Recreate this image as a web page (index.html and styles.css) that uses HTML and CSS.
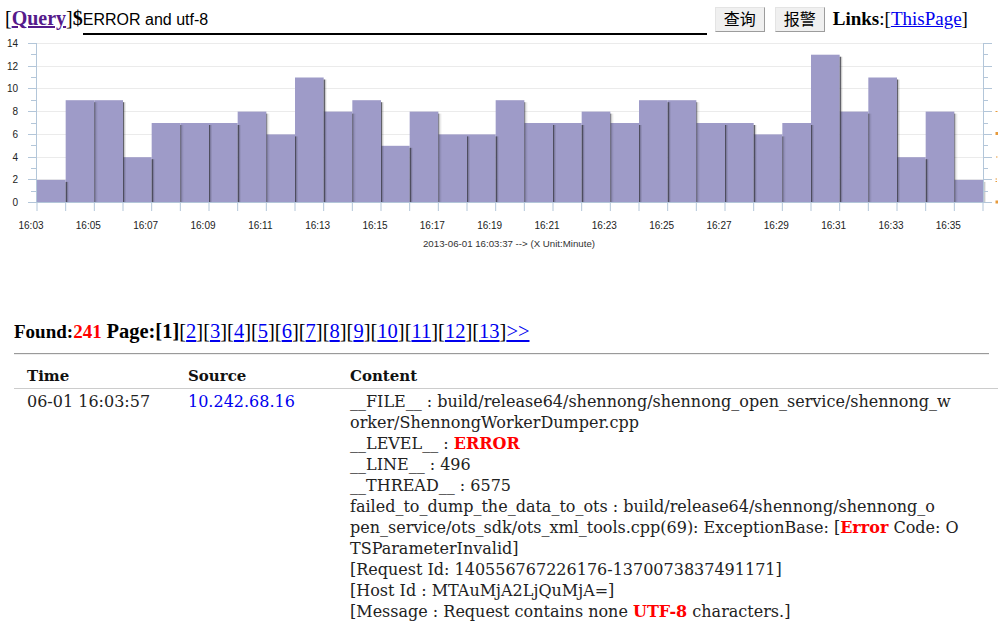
FILE: index.html
```html
<!DOCTYPE html>
<html>
<head>
<meta charset="utf-8">
<title>Query</title>
<link rel="stylesheet" href="styles.css">
</head>
<body>
<div class="topbar">
  <span class="qlabel">[<a class="query" href="#">Query</a>]<b>$</b></span>
  <input class="search" type="text" value="ERROR and utf-8">
  <button class="btn">查询</button>
  <button class="btn btn-last">报警</button>
  <span class="links"><b>Links</b>:[<a href="#">ThisPage</a>]</span>
</div>

<svg class="chart" width="998" height="216" viewBox="0 36 998 216" xmlns="http://www.w3.org/2000/svg">
  <defs>
    <linearGradient id="shade" x1="0" x2="1" y1="0" y2="0">
      <stop offset="0" stop-color="#3a3a44" stop-opacity=".8"/>
      <stop offset=".33" stop-color="#3a3a44" stop-opacity=".8"/>
      <stop offset=".34" stop-color="#000" stop-opacity=".2"/>
      <stop offset=".66" stop-color="#000" stop-opacity=".2"/>
      <stop offset=".67" stop-color="#000" stop-opacity=".08"/>
      <stop offset="1" stop-color="#000" stop-opacity=".08"/>
    </linearGradient>
  </defs>
  <path class="grid" d="M37 43.5H983M37 66.5H983M37 88.5H983M37 111.5H983M37 134.5H983M37 157.5H983M37 179.5H983"/>
  <g class="bars">
    <rect x="37" y="179.9" width="28.67" height="22.8"/>
    <rect x="65.67" y="100.2" width="28.67" height="102.5"/>
    <rect x="94.33" y="100.2" width="28.67" height="102.5"/>
    <rect x="123" y="157.2" width="28.67" height="45.5"/>
    <rect x="151.67" y="123" width="28.67" height="79.7"/>
    <rect x="180.33" y="123" width="28.67" height="79.7"/>
    <rect x="209" y="123" width="28.67" height="79.7"/>
    <rect x="237.67" y="111.6" width="28.67" height="91.1"/>
    <rect x="266.33" y="134.4" width="28.67" height="68.3"/>
    <rect x="295" y="77.5" width="28.67" height="125.2"/>
    <rect x="323.67" y="111.6" width="28.67" height="91.1"/>
    <rect x="352.33" y="100.2" width="28.67" height="102.5"/>
    <rect x="381" y="145.8" width="28.67" height="56.9"/>
    <rect x="409.67" y="111.6" width="28.67" height="91.1"/>
    <rect x="438.33" y="134.4" width="28.67" height="68.3"/>
    <rect x="467" y="134.4" width="28.67" height="68.3"/>
    <rect x="495.67" y="100.2" width="28.67" height="102.5"/>
    <rect x="524.33" y="123" width="28.67" height="79.7"/>
    <rect x="553" y="123" width="28.67" height="79.7"/>
    <rect x="581.67" y="111.6" width="28.67" height="91.1"/>
    <rect x="610.33" y="123" width="28.67" height="79.7"/>
    <rect x="639" y="100.2" width="28.67" height="102.5"/>
    <rect x="667.67" y="100.2" width="28.67" height="102.5"/>
    <rect x="696.33" y="123" width="28.67" height="79.7"/>
    <rect x="725" y="123" width="28.67" height="79.7"/>
    <rect x="753.67" y="134.4" width="28.67" height="68.3"/>
    <rect x="782.33" y="123" width="28.67" height="79.7"/>
    <rect x="811" y="54.7" width="28.67" height="148"/>
    <rect x="839.67" y="111.6" width="28.67" height="91.1"/>
    <rect x="868.33" y="77.5" width="28.67" height="125.2"/>
    <rect x="897" y="157.2" width="28.67" height="45.5"/>
    <rect x="925.67" y="111.6" width="28.67" height="91.1"/>
    <rect x="954.33" y="179.9" width="28.67" height="22.8"/>
  </g>
  <g class="shadows">
    <rect x="65.67" y="181.9" width="3" height="20.8"/>
    <rect x="94.33" y="102.2" width="3" height="100.5"/>
    <rect x="123" y="102.2" width="3" height="100.5"/>
    <rect x="151.67" y="159.2" width="3" height="43.5"/>
    <rect x="180.33" y="125" width="3" height="77.7"/>
    <rect x="209" y="125" width="3" height="77.7"/>
    <rect x="237.67" y="125" width="3" height="77.7"/>
    <rect x="266.33" y="113.6" width="3" height="89.1"/>
    <rect x="295" y="136.4" width="3" height="66.3"/>
    <rect x="323.67" y="79.5" width="3" height="123.2"/>
    <rect x="352.33" y="113.6" width="3" height="89.1"/>
    <rect x="381" y="102.2" width="3" height="100.5"/>
    <rect x="409.67" y="147.8" width="3" height="54.9"/>
    <rect x="438.33" y="113.6" width="3" height="89.1"/>
    <rect x="467" y="136.4" width="3" height="66.3"/>
    <rect x="495.67" y="136.4" width="3" height="66.3"/>
    <rect x="524.33" y="102.2" width="3" height="100.5"/>
    <rect x="553" y="125" width="3" height="77.7"/>
    <rect x="581.67" y="125" width="3" height="77.7"/>
    <rect x="610.33" y="113.6" width="3" height="89.1"/>
    <rect x="639" y="125" width="3" height="77.7"/>
    <rect x="667.67" y="102.2" width="3" height="100.5"/>
    <rect x="696.33" y="102.2" width="3" height="100.5"/>
    <rect x="725" y="125" width="3" height="77.7"/>
    <rect x="753.67" y="125" width="3" height="77.7"/>
    <rect x="782.33" y="136.4" width="3" height="66.3"/>
    <rect x="811" y="125" width="3" height="77.7"/>
    <rect x="839.67" y="56.7" width="3" height="146"/>
    <rect x="868.33" y="113.6" width="3" height="89.1"/>
    <rect x="897" y="79.5" width="3" height="123.2"/>
    <rect x="925.67" y="159.2" width="3" height="43.5"/>
    <rect x="954.33" y="113.6" width="3" height="89.1"/>
    <rect x="983" y="181.9" width="3" height="20.8"/>
  </g>
  <path class="axis" d="M36.5 43V203M983.5 43V203M28 202.5H992
    M28 179.5H36.5M28 157.5H36.5M28 134.5H36.5M28 111.5H36.5M28 88.5H36.5M28 66.5H36.5M28 43.5H36.5
    M31 191.5H36.5M31 168.5H36.5M31 145.5H36.5M31 123.5H36.5M31 100.5H36.5M31 77.5H36.5M31 54.5H36.5
    M983.5 179.5H992M983.5 157.5H992M983.5 134.5H992M983.5 111.5H992M983.5 88.5H992M983.5 66.5H992M983.5 43.5H992
    M983.5 191.5H988M983.5 168.5H988M983.5 145.5H988M983.5 123.5H988M983.5 100.5H988M983.5 77.5H988M983.5 54.5H988
    M37 203V211M65.67 203V211M94.33 203V211M123 203V211M151.67 203V211M180.33 203V211M209 203V211M237.67 203V211
    M266.33 203V211M295 203V211M323.67 203V211M352.33 203V211M381 203V211M409.67 203V211M438.33 203V211M467 203V211
    M495.67 203V211M524.33 203V211M553 203V211M581.67 203V211M610.33 203V211M639 203V211M667.67 203V211M696.33 203V211
    M725 203V211M753.67 203V211M782.33 203V211M811 203V211M839.67 203V211M868.33 203V211M897 203V211M925.67 203V211
    M954.33 203V211M983 203V211"/>
  <path class="rmarks" d="M995.5 111h2v1h-2zM995.5 132h2.5v3h-2.5zM996 156.5h1.5v1h-1.5zM995.5 178.5h1.5v1h-1.5zM995.5 181h1.5v1h-1.5zM995.5 200.5h2.5v3h-2.5z"/>
  <g class="ylab">
    <text x="18" y="206">0</text>
    <text x="18" y="183">2</text>
    <text x="18" y="161">4</text>
    <text x="18" y="138">6</text>
    <text x="18" y="115">8</text>
    <text x="18" y="92">10</text>
    <text x="18" y="70">12</text>
    <text x="18" y="47">14</text>
  </g>
  <g class="xlab">
    <text x="31" y="228.5">16:03</text>
    <text x="88.33" y="228.5">16:05</text>
    <text x="145.67" y="228.5">16:07</text>
    <text x="203" y="228.5">16:09</text>
    <text x="260.33" y="228.5">16:11</text>
    <text x="317.67" y="228.5">16:13</text>
    <text x="375" y="228.5">16:15</text>
    <text x="432.33" y="228.5">16:17</text>
    <text x="489.67" y="228.5">16:19</text>
    <text x="547" y="228.5">16:21</text>
    <text x="604.33" y="228.5">16:23</text>
    <text x="661.67" y="228.5">16:25</text>
    <text x="719" y="228.5">16:27</text>
    <text x="776.33" y="228.5">16:29</text>
    <text x="833.67" y="228.5">16:31</text>
    <text x="891" y="228.5">16:33</text>
    <text x="948.33" y="228.5">16:35</text>
  </g>
  <text class="unit" x="509" y="246.5">2013-06-01 16:03:37 --&gt; (X Unit:Minute)</text>
</svg>

<div class="found"><b>Found:</b><b class="count">241</b> <span class="pages"><b>Page:</b><b>[1]</b>[<a href="#">2</a>][<a href="#">3</a>][<a href="#">4</a>][<a href="#">5</a>][<a href="#">6</a>][<a href="#">7</a>][<a href="#">8</a>][<a href="#">9</a>][<a href="#">10</a>][<a href="#">11</a>][<a href="#">12</a>][<a href="#">13</a>]<a href="#">&gt;&gt;</a></span></div>
<div class="rule"></div>

<table class="logs">
  <colgroup><col class="c-time"><col class="c-src"><col class="c-content"></colgroup>
  <thead>
    <tr><th>Time</th><th>Source</th><th>Content</th></tr>
  </thead>
  <tbody>
    <tr>
      <td>06-01 16:03:57</td>
      <td><a class="ip" href="#">10.242.68.16</a></td>
      <td>__FILE__ : build/release64/shennong/shennong_open_service/shennong_w<br>orker/ShennongWorkerDumper.cpp<br>__LEVEL__ : <b class="hl">ERROR</b><br>__LINE__ : 496<br>__THREAD__ : 6575<br>failed_to_dump_the_data_to_ots : build/release64/shennong/shennong_o<br>pen_service/ots_sdk/ots_xml_tools.cpp(69): ExceptionBase: [<b class="hl">Error</b> Code: O<br>TSParameterInvalid]<br>[Request Id: 140556767226176-1370073837491171]<br>[Host Id : MTAuMjA2LjQuMjA=]<br>[Message : Request contains none <b class="hl">UTF-8</b> characters.]</td>
    </tr>
  </tbody>
</table>
</body>
</html>
```

FILE: styles.css
```css
html, body {
  margin: 0;
  padding: 0;
  overflow: hidden;
  background: #fff;
}

body {
  font-family: "Liberation Serif", "Times New Roman", serif;
  color: #000;
}

a {
  color: #0000ee;
}

/* top query bar */
.topbar {
  display: flex;
  align-items: baseline;
  height: 36px;
  box-sizing: border-box;
  padding: 7px 0 0 5px;
  font-size: 20px;
}

.qlabel .query {
  color: #551a8b;
  font-weight: bold;
}

.search {
  width: 624px;
  height: 24px;
  box-sizing: border-box;
  margin: 0 8px 0 0;
  padding: 0 0 4px 0;
  border: none;
  border-bottom: 2px solid #000;
  border-radius: 0;
  font: 16px/18px "Liberation Sans", Arial, sans-serif;
  color: #000;
  background: transparent;
  outline: none;
}

.btn {
  align-self: flex-start;
  width: 50px;
  height: 25px;
  margin: 0 10px 0 0;
  padding: 0 0 3px 0;
  box-sizing: border-box;
  border: 1px solid;
  border-color: #e4e4e4 #9c9c9c #9c9c9c #e4e4e4;
  border-radius: 0;
  background: #f0f0f0;
  font: 16px/20px "Noto Sans CJK SC", sans-serif;
  color: #000;
}

.btn-last {
  margin-right: 8px;
}

.links {
  font-size: 19px;
}

/* chart */
.chart {
  display: block;
}

.chart .grid {
  stroke: #ebebeb;
  stroke-width: 1;
  fill: none;
}

.chart .bars rect {
  fill: #9e9bc8;
}

.chart .shadows rect {
  fill: url(#shade);
}

.chart .axis {
  stroke: #b3c6d9;
  stroke-width: 1;
  fill: none;
}

.chart .rmarks {
  fill: #e69a3c;
}

.chart text {
  font-family: "Liberation Sans", Arial, sans-serif;
  font-size: 10px;
  fill: #222;
}

.chart .ylab text {
  text-anchor: end;
}

.chart .xlab text {
  text-anchor: middle;
}

.chart .unit {
  text-anchor: middle;
  font-size: 9.7px;
  fill: #333;
}

/* result summary */
.found {
  margin: 68px 0 0 14px;
  font-size: 19px;
  line-height: 22px;
}

.found .count {
  color: #f00;
}

.found .pages {
  font-size: 20.5px;
}

.rule {
  margin: 10px 9px 0 14px;
  border-top: 1px solid #9a9a9a;
  border-bottom: 1px solid #eeeeee;
}

/* log table */
.logs {
  margin: 11px 0 0 14px;
  width: 984px;
  table-layout: fixed;
  border-collapse: collapse;
  font-family: "DejaVu Serif", serif;
}

.logs .c-time {
  width: 161px;
}

.logs .c-src {
  width: 162px;
}

.logs th {
  text-align: left;
  font-size: 15px;
  line-height: 21px;
  font-weight: bold;
  color: #111;
  padding: 0 0 1px 13px;
  border-bottom: 1px solid #cccccc;
}

.logs td {
  vertical-align: top;
  font-size: 16px;
  line-height: 21px;
  color: #222;
  padding: 2px 0 0 13px;
  white-space: nowrap;
}

.logs .ip {
  text-decoration: none;
}

.logs .hl {
  color: #f00;
}
```
